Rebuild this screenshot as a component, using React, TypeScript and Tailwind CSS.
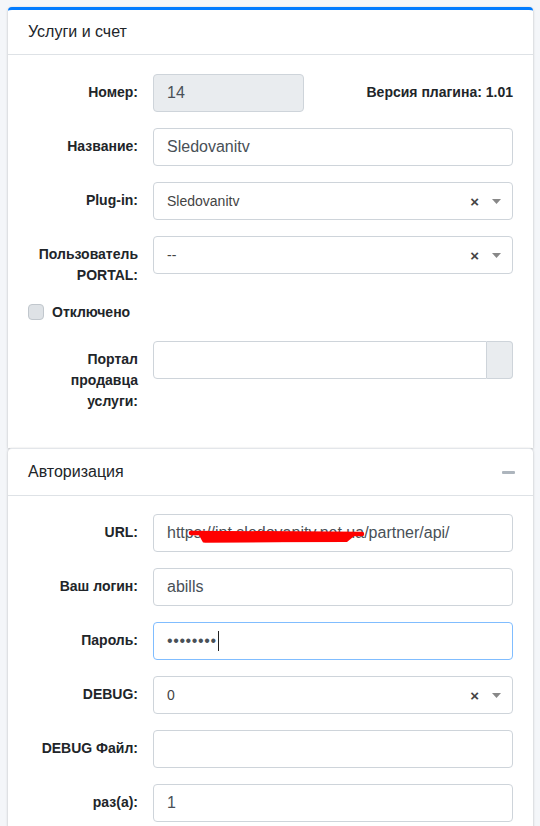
import React from 'react';

const font = { fontFamily: '"Liberation Sans", Arial, sans-serif' };

function Label({ children }: { children: React.ReactNode }) {
  return (
    <label className="w-[125px] shrink-0 pr-[15px] pt-[8px] text-right text-[14px] font-bold leading-[21px] text-[#212529]">
      {children}
    </label>
  );
}

function Input({ value, focused }: { value?: string; focused?: boolean }) {
  return (
    <div
      className={`flex h-[38px] w-full items-center rounded-[4px] border bg-white px-[13px] text-[16px] text-[#495057] ${
        focused ? 'border-[#80bdff]' : 'border-[#ced4da]'
      }`}
    >
      {value}
    </div>
  );
}

function Select({ value }: { value: string }) {
  return (
    <div className="flex h-[38px] w-full items-center rounded-[4px] border border-[#ced4da] bg-white pl-[13px] pr-[11px] text-[14px] text-[#444]">
      <span className="flex-1">{value}</span>
      <span className="mr-[13px] text-[15px] font-bold leading-none text-[#444]">×</span>
      <svg width="9" height="5" viewBox="0 0 9 5">
        <path d="M0 0h9L4.5 5z" fill="#888" />
      </svg>
    </div>
  );
}

function Row({ label, children }: { label: React.ReactNode; children: React.ReactNode }) {
  return (
    <div className="mb-4 flex">
      <Label>{label}</Label>
      <div className="flex-1">{children}</div>
    </div>
  );
}

export default function App() {
  return (
    <div className="min-h-screen bg-[#f4f6f9] pl-2 pr-[7px] pt-[7px]" style={font}>
      {/* Услуги и счет */}
      <div className="rounded-t-[4px] border-t-[3px] border-[#007bff] bg-white shadow-[0_0_1px_rgba(0,0,0,.125),0_1px_3px_rgba(0,0,0,.2)]">
        <div className="flex h-[45px] items-center border-b border-[#dee2e6] px-5 text-[16px] text-[#212529]">
          Услуги и счет
        </div>
        <div className="px-5 pb-5 pt-[19px]">
          <div className="mb-4 flex">
            <Label>Номер:</Label>
            <div className="flex h-[38px] w-[151px] items-center rounded-[4px] border border-[#ced4da] bg-[#e9ecef] px-[13px] text-[16px] text-[#495057]">
              14
            </div>
            <div className="flex-1 pt-[8px] text-right text-[14px] font-bold leading-[21px] text-[#212529]">
              Версия плагина: 1.01
            </div>
          </div>
          <Row label="Название:">
            <Input value="Sledovanitv" />
          </Row>
          <Row label="Plug-in:">
            <Select value="Sledovanitv" />
          </Row>
          <Row label={<>Пользователь<br />PORTAL:</>}>
            <Select value="--" />
          </Row>
          <div className="mb-[19px] flex items-center gap-2">
            <span className="h-4 w-4 rounded-[4px] border border-[#c1c7cd] bg-[#dee2e6]" />
            <span className="text-[14px] font-bold leading-[20px] text-[#212529]">Отключено</span>
          </div>
          <Row label={<>Портал<br />продавца<br />услуги:</>}>
            <div className="flex h-[38px] w-full">
              <div className="flex-1 rounded-l-[4px] border border-[#ced4da] bg-white" />
              <div className="w-[26px] rounded-r-[4px] border border-l-0 border-[#ced4da] bg-[#e9ecef]" />
            </div>
          </Row>
        </div>
      </div>

      {/* Авторизация */}
      <div className="rounded-t-[4px] border-t border-[#e3e6ea] bg-white shadow-[0_0_1px_rgba(0,0,0,.125),0_1px_3px_rgba(0,0,0,.2)]">
        <div className="flex h-[47px] items-center border-b border-[#dee2e6] pl-5 pr-[18px] text-[16px] text-[#212529]">
          <span className="flex-1">Авторизация</span>
          <span className="h-[3px] w-[13px] rounded-[1px] bg-[#adb5bd]" />
        </div>
        <div className="px-5 pb-5 pt-[18px]">
          <Row label="URL:">
            <div className="relative">
              <Input value="https://ipt.sledovanitv.net.ua/partner/api/" />
              <svg className="absolute left-0 top-0" width="360" height="38" viewBox="0 0 360 38">
                <path d="M44 17.5 L206 18 L194 28 L50 28.5 Z" fill="#ff0000" />
                <path d="M38 19 L209 20" stroke="#ff0000" strokeWidth="4.5" strokeLinecap="round" />
                <path d="M52 26 L192 25" stroke="#ff0000" strokeWidth="5" strokeLinecap="round" />
              </svg>
            </div>
          </Row>
          <Row label="Ваш логин:">
            <Input value="abills" />
          </Row>
          <Row label="Пароль:">
            <div className="flex h-[38px] w-full items-center rounded-[4px] border border-[#80bdff] bg-white px-[13px] text-[16px] text-[#495057]">
              <span className="tracking-[0.6px]">••••••••</span>
              <span className="ml-[1px] h-[20px] w-[1px] bg-[#222]" />
            </div>
          </Row>
          <Row label="DEBUG:">
            <Select value="0" />
          </Row>
          <Row label="DEBUG Файл:">
            <Input />
          </Row>
          <Row label="раз(а):">
            <Input value="1" />
          </Row>
        </div>
      </div>
    </div>
  );
}
